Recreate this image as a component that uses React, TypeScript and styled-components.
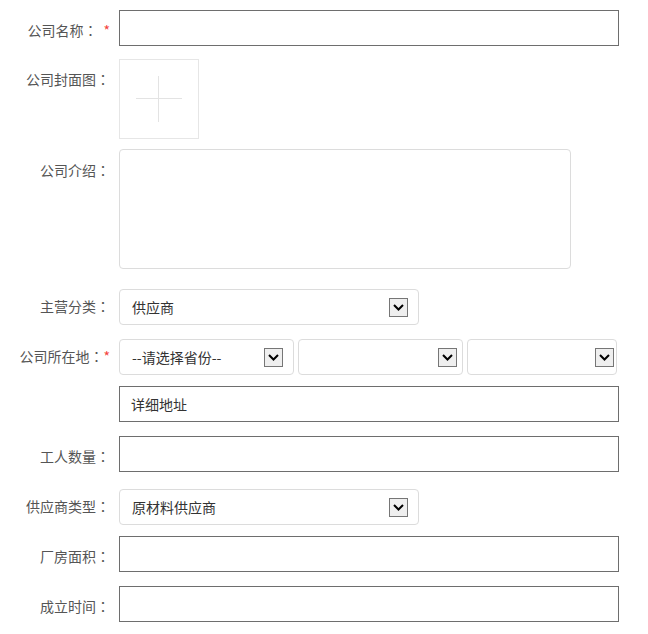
import React from 'react'
import styled, { createGlobalStyle } from 'styled-components'

const GlobalStyle = createGlobalStyle`
  body {
    margin: 0;
    background: #fff;
    font-family: "Noto Sans CJK SC", "Noto Sans", sans-serif;
  }
`

const Form = styled.div`
  padding-top: 10px;
  width: 648px;
`

const Row = styled.div<{ $gap: number }>`
  display: flex;
  align-items: flex-start;
  margin-bottom: ${p => p.$gap}px;
`

const Label = styled.div<{ $pad: number }>`
  width: 110px;
  flex-shrink: 0;
  padding-top: ${p => p.$pad}px;
  line-height: 20px;
  font-size: 14px;
  color: #555;
  text-align: right;
  white-space: nowrap;
`

// full-width colon, centred in its cell as in the original font
const Colon = styled.span`
  font-family: "Noto Sans CJK TC", "Noto Sans CJK SC", sans-serif;
`

const Star = styled.span<{ $space: number }>`
  color: #f4433c;
  padding-left: ${p => p.$space}px;
  font-size: 14px;
`

const Field = styled.div`
  margin-left: 9px;
  display: flex;
  flex-direction: column;
`

const TextInput = styled.div<{ $width?: number }>`
  box-sizing: border-box;
  width: ${p => p.$width ?? 500}px;
  height: 36px;
  border: 1px solid #6e6e6e;
  padding-left: 11px;
  font-size: 14px;
  line-height: 34px;
  color: #333;
`

const Upload = styled.div`
  box-sizing: border-box;
  width: 80px;
  height: 80px;
  border: 1px solid #e6e6e6;
  display: flex;
  align-items: center;
  justify-content: center;
`

const TextArea = styled.div`
  box-sizing: border-box;
  width: 452px;
  height: 120px;
  border: 1px solid #dcdcdc;
  border-radius: 4px;
`

const SelectBox = styled.div<{ $width: number; $inset: number }>`
  box-sizing: border-box;
  width: ${p => p.$width}px;
  height: 36px;
  border: 1px solid #dcdcdc;
  border-radius: 4px;
  display: flex;
  align-items: center;
  justify-content: space-between;
  padding-left: 12px;
  padding-right: ${p => p.$inset}px;
  font-size: 14px;
  color: #333;
`

const ArrowBox = styled.span`
  box-sizing: border-box;
  width: 19px;
  height: 19px;
  border: 1px solid #767676;
  background: #efefef;
  display: flex;
  align-items: center;
  justify-content: center;
`

const SelectRow = styled.div`
  display: flex;
  gap: 4px;
  margin-bottom: 11px;
`

function Arrow() {
  return (
    <ArrowBox>
      <svg width="11" height="7" viewBox="0 0 11 7">
        <path d="M1 1 L5.5 5.5 L10 1" fill="none" stroke="#000" strokeWidth="2" />
      </svg>
    </ArrowBox>
  )
}

function Select({ text, width, inset }: { text?: string; width: number; inset: number }) {
  return (
    <SelectBox $width={width} $inset={inset}>
      <span>{text}</span>
      <Arrow />
    </SelectBox>
  )
}

function FieldLabel({ text, pad, star }: { text: string; pad: number; star?: number }) {
  return (
    <Label $pad={pad}>
      {text}<Colon>：</Colon>
      {star !== undefined && <Star $space={star}>*</Star>}
    </Label>
  )
}

export default function App() {
  return (
    <Form>
      <GlobalStyle />
      <Row $gap={13}>
        <FieldLabel text="公司名称" pad={10} star={6} />
        <Field><TextInput /></Field>
      </Row>
      <Row $gap={10}>
        <FieldLabel text="公司封面图" pad={10} />
        <Field>
          <Upload>
            <svg width="46" height="46" viewBox="0 0 46 46">
              <path d="M0 22.5 H46 M22.5 0 V46" stroke="#e3e3e3" strokeWidth="1" />
            </svg>
          </Upload>
        </Field>
      </Row>
      <Row $gap={20}>
        <FieldLabel text="公司介绍" pad={11} />
        <Field><TextArea /></Field>
      </Row>
      <Row $gap={14}>
        <FieldLabel text="主营分类" pad={7} />
        <Field><Select text="供应商" width={300} inset={10} /></Field>
      </Row>
      <Row $gap={14}>
        <FieldLabel text="公司所在地" pad={7} star={0} />
        <Field>
          <SelectRow>
            <Select text="--请选择省份--" width={175} inset={10} />
            <Select width={165} inset={5} />
            <Select width={150} inset={2} />
          </SelectRow>
          <TextInput>详细地址</TextInput>
        </Field>
      </Row>
      <Row $gap={17}>
        <FieldLabel text="工人数量" pad={10} />
        <Field><TextInput /></Field>
      </Row>
      <Row $gap={11}>
        <FieldLabel text="供应商类型" pad={7} />
        <Field><Select text="原材料供应商" width={300} inset={10} /></Field>
      </Row>
      <Row $gap={14}>
        <FieldLabel text="厂房面积" pad={10} />
        <Field><TextInput /></Field>
      </Row>
      <Row $gap={0}>
        <FieldLabel text="成立时间" pad={10} />
        <Field><TextInput /></Field>
      </Row>
    </Form>
  )
}
